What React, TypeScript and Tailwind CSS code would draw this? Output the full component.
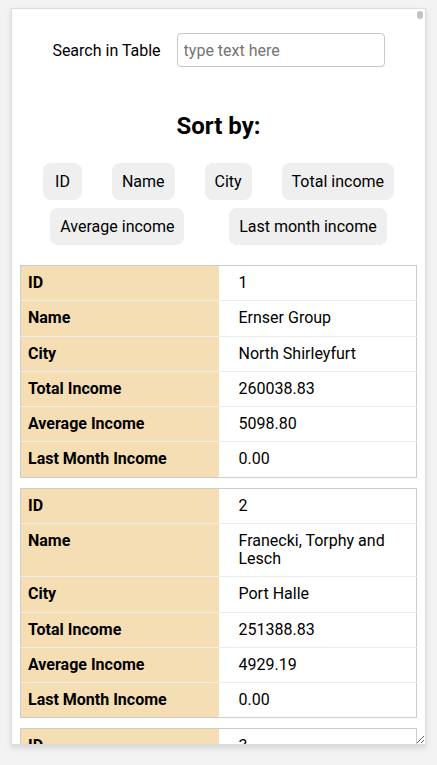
import React from "react";

type Row = { id: number; name: string; city: string; total: string; avg: string; last: string };

const data: Row[] = [
  { id: 1, name: "Ernser Group", city: "North Shirleyfurt", total: "260038.83", avg: "5098.80", last: "0.00" },
  { id: 2, name: "Franecki, Torphy and Lesch", city: "Port Halle", total: "251388.83", avg: "4929.19", last: "0.00" },
  { id: 3, name: "Bahringer - Hagenes", city: "Lake Rosalind", total: "248221.14", avg: "4866.99", last: "0.00" },
];

const sortButtons = ["ID", "Name", "City", "Total income", "Average income", "Last month income"];

function Entry({ r }: { r: Row }) {
  const fields: [string, string][] = [
    ["ID", String(r.id)],
    ["Name", r.name],
    ["City", r.city],
    ["Total Income", r.total],
    ["Average Income", r.avg],
    ["Last Month Income", r.last],
  ];
  return (
    <table className="w-full table-fixed border-collapse border border-[#cccccc]">
      <tbody>
        {fields.map(([k, v], i) => (
          <tr key={k} className={i < fields.length - 1 ? "border-b border-[#ececec]" : ""}>
            <td className="w-1/2 bg-[#f5deb3] pl-[7px] py-2 font-bold align-top leading-[18.25px] text-black">{k}</td>
            <td className="pl-5 pr-2 py-2 align-top leading-[18.25px] text-black">{v}</td>
          </tr>
        ))}
      </tbody>
    </table>
  );
}

export default function App() {
  return (
    <div
      className="min-h-screen bg-[#f3f3f3] pt-2 px-[11px] text-base text-black"
      style={{ fontFamily: "Roboto, 'Noto Sans', sans-serif" }}
    >
      <div className="relative h-[737px] bg-white border border-[#dddddd] shadow-[0_3px_6px_rgba(0,0,0,0.12)] overflow-hidden resize">
        <div className="mt-6 flex items-center justify-center gap-4">
          <span className="leading-[19px]">Search in Table</span>
          <input
            className="w-[208px] h-[34px] border border-[#c8c8c8] rounded px-[6px] text-base outline-none placeholder:text-[#757575]"
            placeholder="type text here"
          />
        </div>
        <h2 className="mt-[45px] text-center text-2xl font-bold leading-[28px]">Sort by:</h2>
        <div className="mt-[23px] px-4 flex flex-wrap justify-around gap-y-2">
          {sortButtons.map((b) => (
            <button key={b} className="min-w-[39px] bg-[#efefef] rounded-[8px] px-[10px] py-[9px] leading-[19px] text-base text-black">
              {b}
            </button>
          ))}
        </div>
        <div className="mt-5 mx-2 flex flex-col gap-[10px]">
          {data.map((r) => (
            <Entry key={r.id} r={r} />
          ))}
        </div>
        <div className="absolute right-[2px] top-[2px] w-[6px] h-[8px] rounded-full bg-[#c2c2c2]" />
      </div>
    </div>
  );
}
